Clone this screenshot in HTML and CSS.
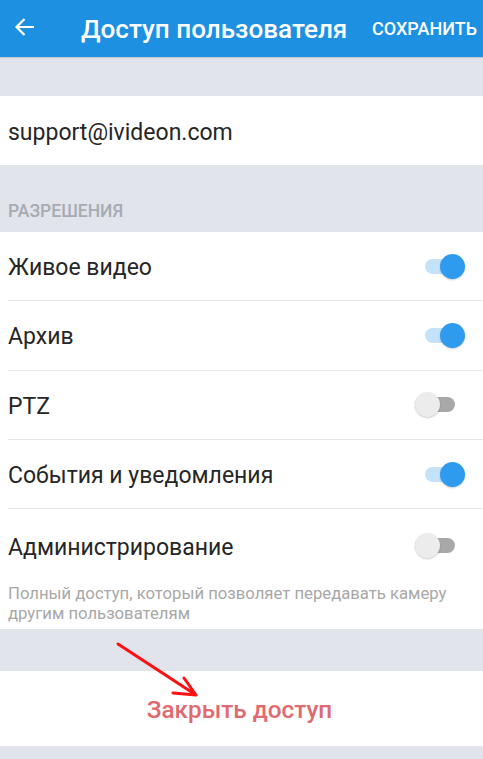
FILE: index.html
```html
<!DOCTYPE html>
<html lang="ru">
<head>
  <meta charset="UTF-8" />
  <title>Доступ пользователя</title>
  <link rel="stylesheet" href="styles.css">
</head>
<body>

<div class="screen">
  <header class="appbar">
    <button class="back" aria-label="Назад">
      <svg width="21" height="20" viewBox="0 0 21 20">
        <path d="M20 10H2.5 M10.5 2L2.5 10l8 8" fill="none" stroke="#fff" stroke-width="2.2" />
      </svg>
    </button>
    <h1 class="title">Доступ пользователя</h1>
    <span class="save">СОХРАНИТЬ</span>
  </header>

  <div class="spacer"></div>

  <div class="email">support@ivideon.com</div>

  <div class="section-label">РАЗРЕШЕНИЯ</div>

  <div class="list">
    <div class="row">
      <span>Живое видео</span>
      <span class="switch on"><i></i></span>
    </div>
    <div class="row">
      <span>Архив</span>
      <span class="switch on"><i></i></span>
    </div>
    <div class="row">
      <span>PTZ</span>
      <span class="switch"><i></i></span>
    </div>
    <div class="row">
      <span>События и уведомления</span>
      <span class="switch on"><i></i></span>
    </div>
    <div class="row last">
      <span>Администрирование</span>
      <span class="switch"><i></i></span>
    </div>
    <p class="note">Полный доступ, который позволяет передавать камеру другим пользователям</p>
  </div>

  <div class="spacer tall"></div>

  <div class="danger">Закрыть доступ</div>

  <!-- red annotation arrow -->
  <svg class="annotation" width="100" height="70" viewBox="0 0 100 70">
    <path d="M2 2L80 53 M68 36L80 53L57 51" fill="none" stroke="#ff1010" stroke-width="3" stroke-linecap="round" stroke-linejoin="round" />
  </svg>
</div>

</body>
</html>
```

FILE: styles.css
```css
body {
  margin: 0;
  font-family: Roboto, "Noto Sans", sans-serif;
  background: #e1e4eb;
  color: #262626;
}

.screen {
  position: relative;
  width: 483px;
  height: 759px;
  overflow: hidden;
}

.appbar {
  height: 57px;
  background: #1e90e2;
  display: flex;
  align-items: center;
  color: white;
  box-shadow: 0 1px 1px rgba(0, 0, 0, 0.12);
}

.back {
  background: none;
  border: none;
  padding: 0;
  margin: 0 0 4px 14px;
  width: 22px;
  display: flex;
}

.title {
  margin: 0 0 0 45px;
  font-size: 26.1px;
  font-weight: 500;
  flex: 1;
  white-space: nowrap;
}

.save {
  font-size: 18px;
  font-weight: 500;
  margin-right: 6px;
}

.spacer {
  height: 39px;
}

.spacer.tall {
  height: 42px;
}

.email {
  background: white;
  height: 69px;
  box-sizing: border-box;
  display: flex;
  align-items: center;
  padding: 3px 0 0 8px;
  font-size: 23px;
}

.section-label {
  height: 67px;
  box-sizing: border-box;
  padding: 36px 0 0 8px;
  font-size: 17.5px;
  font-weight: 500;
  color: #a7abb2;
}

.list {
  background: white;
  padding-left: 8px;
}

.row {
  height: 68.3px;
  box-sizing: content-box;
  border-bottom: 1px solid #e6e6e6;
  display: flex;
  align-items: center;
  justify-content: space-between;
  font-size: 23px;
}

.row span:first-child {
  padding-top: 3px;
}

.row.last {
  border-bottom: none;
  height: 73px;
}

.switch {
  position: relative;
  width: 40px;
  height: 15px;
  border-radius: 8px;
  background: #a8a8a8;
  margin-right: 28px;
}

.switch i {
  position: absolute;
  top: -5px;
  left: 0;
  width: 25px;
  height: 25px;
  border-radius: 50%;
  background: #ececec;
  box-shadow: 0 1px 2px rgba(0, 0, 0, 0.2);
}

.switch.on {
  background: #c4e2fa;
  margin-right: 20px;
  width: 38px;
}

.switch.on i {
  left: auto;
  right: -2px;
  background: #2f9bee;
}

.note {
  margin: 0;
  padding: 2px 20px 5px 0;
  font-size: 16.7px;
  line-height: 20px;
  color: #a8a8a8;
}

.danger {
  background: white;
  height: 75px;
  display: flex;
  align-items: center;
  justify-content: center;
  font-size: 24.3px;
  font-weight: 500;
  color: #e06a6f;
  padding: 2px 4px 0 0;
  box-sizing: border-box;
}

.annotation {
  position: absolute;
  left: 116px;
  top: 642px;
}
```
